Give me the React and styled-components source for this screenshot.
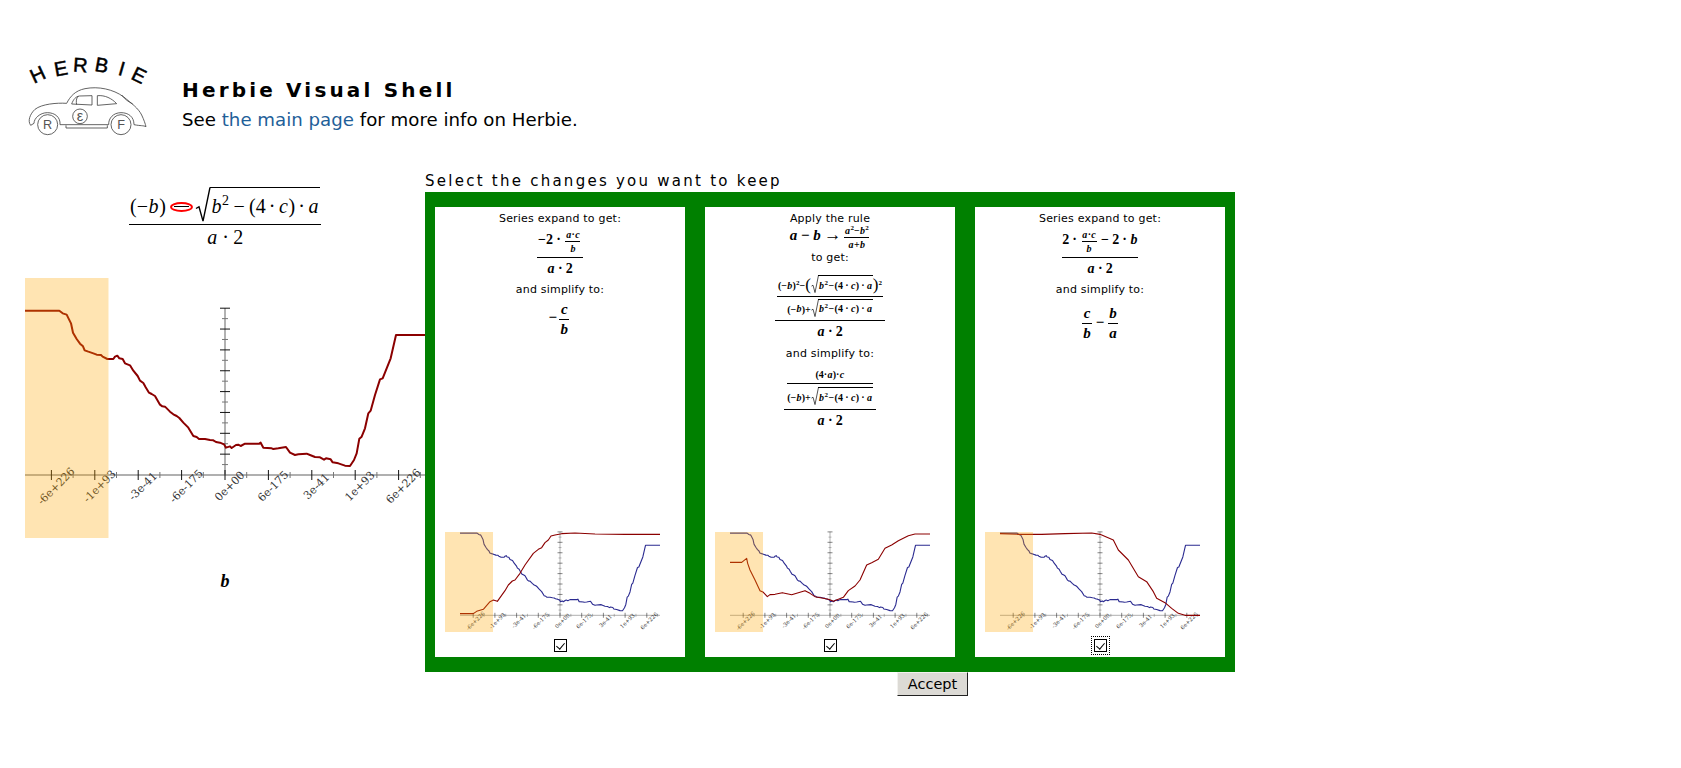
import React from 'react';
import styled, { createGlobalStyle } from 'styled-components';

const GlobalStyle = createGlobalStyle`
  html, body { margin: 0; padding: 0; background: #fff; }
  body { font-family: "DejaVu Sans", sans-serif; color: #000; }
`;

const MAIN_LINE = [[75,152],[178,152],[188,160],[200,164],[207,178],[213,190],[219,218],[230,237],[240,251],[249,259],[254,271],[265,275],[280,280],[290,284],[303,285],[308,290],[322,297],[340,297],[345,290],[352,287],[358,295],[368,297],[375,310],[390,316],[400,332],[413,348],[420,362],[430,369],[437,382],[447,398],[455,402],[465,408],[480,434],[487,439],[495,440],[510,455],[520,463],[530,468],[538,474],[550,488],[565,503],[580,528],[590,531],[597,537],[615,537],[630,540],[640,541],[648,546],[660,548],[672,553],[678,563],[690,559],[695,564],[708,555],[715,554],[722,558],[735,551],[778,551],[782,548],[790,563],[815,565],[820,567],[835,565],[858,561],[870,578],[885,585],[895,583],[920,581],[930,585],[945,591],[960,592],[972,599],[978,595],[992,598],[998,607],[1015,610],[1035,617],[1050,618],[1062,600],[1070,580],[1078,536],[1085,530],[1095,505],[1105,460],[1112,452],[1125,405],[1140,358],[1148,355],[1160,325],[1172,295],[1188,225],[1275,225]]
  .map(([x, y]) => [x / 3 - 25, y / 3 + 260 - 475]);

// red curves are traced at panel scale, so convert them to the big plot's units
const fromSmall = (pts) => pts.map(([x, y]) => [(x / 3 - 35) * 2, (y / 3 + 520 - 615.3) * 2]);

const EXPAND_A = fromSmall([[105,281],[145,281],[155,274],[175,268],[195,245],[205,240],[217,244],[240,212],[250,195],[262,183],[270,180],[285,160],[300,135],[325,100],[340,88],[350,83],[360,68],[370,60],[378,48],[390,45],[410,41],[450,39],[510,42],[600,43],[705,43]]);
const RULE_B = fromSmall([[105,127],[140,127],[155,115],[158,130],[165,150],[180,180],[195,212],[205,217],[217,230],[225,224],[240,223],[262,218],[290,224],[330,212],[345,220],[360,230],[400,238],[415,244],[445,232],[460,212],[480,198],[495,180],[515,135],[530,128],[550,118],[570,85],[590,75],[610,62],[640,47],[660,42],[705,42]]);
const EXPAND_C = fromSmall([[105,41],[160,43],[230,43],[300,41],[380,39],[405,43],[445,60],[460,90],[490,120],[520,170],[545,185],[565,215],[575,235],[600,248],[620,265],[640,280],[660,286],[705,286]]);

const LABELS = ['-6e+226', '-1e+93', '-3e-41', '-6e-175', '0e+00', '6e-175', '3e-41', '1e+93', '6e+226'];

function Plot({ scale, width, height, left, axisY, bandW, curves }) {
  const step = 43.4;
  const originX = 200;
  const xTicks = [];
  for (let i = -4; i <= 4; i++) xTicks.push(originX + i * step);
  const xMinor = [];
  for (let i = -4; i <= 4; i++) xMinor.push(originX + (i + 0.5) * step);
  const yStep = 20.85;
  return (
    <PlotSvg width={width} height={height} viewBox={`0 0 ${width} ${height}`}>
      <g transform={`translate(${left} ${axisY}) scale(${scale})`}>
        <line x1="0" x2="400" y1="0" y2="0" stroke="#b0b0b0" strokeWidth="2" />
        <line x1={originX} x2={originX} y1="0" y2="-167" stroke="#999" strokeWidth="1.5" />
        {xTicks.map((x) => <line key={x} x1={x} x2={x} y1="-5" y2="5" stroke="#111" />)}
        {xMinor.map((x) => <line key={x} x1={x} x2={x} y1="-3" y2="3" stroke="#777" />)}
        {[1, 2, 3, 4, 5, 6, 7, 8].map((i) => (
          <line key={i} x1={originX - 5} x2={originX + 5} y1={-i * yStep} y2={-i * yStep} stroke="#111" />
        ))}
        {[0.5, 1.5, 2.5, 3.5, 4.5, 5.5, 6.5, 7.5].map((i) => (
          <line key={i} x1={originX - 3} x2={originX + 3} y1={-i * yStep} y2={-i * yStep} stroke="#777" />
        ))}
        {LABELS.map((t, i) => {
          const x = originX + (i - 4) * step + 4.5;
          return (
            <AxisLabel key={t} x={x} y="15" textAnchor="middle" transform={`rotate(-45 ${x} 11)`}>{t}</AxisLabel>
          );
        })}
        {curves.map((c) => (
          <polyline
            key={c.color}
            points={c.points.map((p) => p.join(',')).join(' ')}
            fill="none"
            stroke={c.color}
            strokeWidth={c.width}
            strokeLinejoin="round"
          />
        ))}
      </g>
      <rect x="0" y="0" width={bandW} height={height} fill="orange" opacity="0.3" />
    </PlotSvg>
  );
}

function Logo() {
  const letters = [['H', 92, 122, -25], ['E', 156, 106, -10], ['R', 210, 96, 4], ['B', 272, 96, 10], ['I', 330, 106, 16], ['E', 378, 124, 26]];
  return (
    <LogoSvg viewBox="0 0 450 330" width="150" height="110">
      {letters.map(([l, x, y, r], i) => (
        <LogoLetter key={i} x={x} y={y} transform={`rotate(${r} ${x} ${y})`}>{l}</LogoLetter>
      ))}
      <g fill="none" stroke="#444" strokeWidth="2.5">
        <path d="M62 256 C52 243 60 222 75 208 C95 192 140 188 170 190 C180 170 195 152 225 146 C265 138 310 148 340 170 C365 190 385 205 395 225 C402 240 406 252 408 260 C400 256 392 258 372 254 C372 230 355 218 333 218 C310 218 295 235 296 254 L150 254 C152 232 135 218 112 218 C90 218 72 235 72 250 Z" />
        <path d="M185 192 C190 178 197 170 208 168 L246 167 L246 195 Z" />
        <path d="M205 168 C198 175 198 185 200 194" />
        <path d="M262 167 C285 165 305 175 320 191 L262 196 Z" />
        <path d="M335 165 C345 178 355 185 368 192" />
        <path d="M168 256 L168 264 L292 264 L292 256" />
        <circle cx="113" cy="254" r="30" />
        <circle cx="333" cy="254" r="30" />
        <circle cx="210" cy="229" r="22" />
      </g>
      <WheelText x="113" y="268" $size={38}>R</WheelText>
      <WheelText x="333" y="268" $size={38}>F</WheelText>
      <WheelText x="210" y="243" $size={44}>ε</WheelText>
    </LogoSvg>
  );
}

const V = styled.i`
  font-family: "Liberation Serif", serif;
  font-style: italic;
  padding: 0 0.03em;
`;

const Op = styled.span`
  font-family: "Liberation Serif", serif;
  font-style: normal;
  padding: 0 ${(p) => p.$gap || 0.22}em;
`;

const Arrow = styled.span`
  font-size: 1.15em;
  font-weight: 400;
  padding: 0 0.1em 0 0.15em;
`;

const Sup = styled.sup`
  font-size: 0.7em;
  line-height: 0;
  vertical-align: 0.55em;
`;

const Math = styled.span`
  display: inline-block;
  font-family: "Liberation Serif", serif;
  font-size: ${(p) => p.$size}px;
  font-weight: ${(p) => (p.$thin ? 400 : 700)};
  line-height: 1.1;
  white-space: nowrap;
`;

const FracBox = styled.span`
  display: inline-flex;
  flex-direction: column;
  align-items: center;
  vertical-align: middle;
  margin: 0 0.15em;
`;

const FracTop = styled.span`
  display: block;
  padding: 0 0.05em ${(p) => p.$gap || 2}px;
  border-bottom: 1px solid #000;
  width: 100%;
  box-sizing: border-box;
  text-align: center;
`;

const FracBottom = styled.span`
  display: block;
  padding: ${(p) => p.$gap || 2}px 0.05em 0;
`;

const RootBox = styled.span`
  display: inline-block;
  position: relative;
  padding-left: 0.75em;
`;

const RootSign = styled.svg`
  position: absolute;
  left: 0;
  top: 0;
  width: 0.8em;
  height: 100%;
`;

const RootBody = styled.span`
  display: inline-block;
  border-top: 1px solid #000;
  padding: 0.35em 0.05em 0.3em;
`;

const Bigger = styled.span`
  font-size: 1.7em;
  font-weight: 400;
  line-height: 0.8;
  vertical-align: -0.08em;
`;

const MinusCircle = styled.span`
  display: inline-block;
  width: 19px;
  height: 6px;
  margin: 0 2px 0 4px;
  border: 2px solid #f00;
  border-radius: 50%;
  vertical-align: 1px;
  position: relative;
  &::after {
    content: '';
    position: absolute;
    left: 2px;
    right: 2px;
    top: 2px;
    height: 1px;
    background: #000;
  }
`;

const Fr = ({ n, d, gap }) => (
  <FracBox>
    <FracTop $gap={gap}>{n}</FracTop>
    <FracBottom $gap={gap}>{d}</FracBottom>
  </FracBox>
);

const Root = ({ children }) => (
  <RootBox>
    <RootSign viewBox="0 0 16 40" preserveAspectRatio="none">
      <path d="M1 24 L4 22 L8 38 L15 0.5" fill="none" stroke="#000" strokeWidth="1.4" />
    </RootSign>
    <RootBody>{children}</RootBody>
  </RootBox>
);

const Disc = ({ thin }) => (
  <>
    <V>b</V><Sup>2</Sup><Op $gap={thin ? 0.22 : 0.05}>−</Op>(4<Op $gap={thin ? 0.15 : 0}>·</Op><V>c</V>)<Op $gap={thin ? 0.15 : 0}>·</Op><V>a</V>
  </>
);

const NegB = () => <>(−<V>b</V>)</>;

const ADenom = () => <><V>a</V><Op>·</Op>2</>;

const AC = () => <><V>a</V>·<V>c</V></>;

export default function App() {
  return (
    <Page>
      <GlobalStyle />
      <Header>
        <Logo />
        <Intro>
          <Title>Herbie Visual Shell</Title>
          <Blurb>See <MainLink href="#">the main page</MainLink> for more info on Herbie.</Blurb>
        </Intro>
      </Header>
      <Main>
        <LeftCol>
          <Formula>
            <Math $size={20} $thin>
              <Fr
                gap={1}
                n={<><NegB /><MinusCircle /><Root><Disc thin /></Root></>}
                d={<ADenom />}
              />
            </Math>
          </Formula>
          <Plot scale={1} width={400} height={260} left={0} axisY={197} bandW={83.5}
            curves={[{ color: '#8b0000', width: 2, points: MAIN_LINE }]} />
          <AxisName><Math $size={18}><V>b</V></Math></AxisName>
        </LeftCol>
        <RightCol>
          <Heading>Select the changes you want to keep</Heading>
          <Candidates>
            <Panel>
              <PanelBody>
                <Line>Series expand to get:</Line>
                <MathRow $top={4} $bottom={7}>
                  <Math $size={14}>
                    <Fr gap={3} n={<>−2<Op>·</Op><Math $size={10}><Fr gap={1} n={<AC />} d={<V>b</V>} /></Math></>} d={<ADenom />} />
                  </Math>
                </MathRow>
                <Line>and simplify to:</Line>
                <MathRow $top={5} $bottom={6}>
                  <Math $size={15}>−<Fr gap={1} n={<V>c</V>} d={<V>b</V>} /></Math>
                </MathRow>
              </PanelBody>
              <PanelPlot curves={EXPAND_A} />
              <Choice />
            </Panel>
            <Panel>
              <PanelBody>
                <Line>Apply the rule</Line>
                <RuleRow>
                  <Math $size={15}>
                    <V>a</V><Op>−</Op><V>b</V><Arrow>→</Arrow>
                    <Math $size={10}><Fr gap={1} n={<><V>a</V><Sup>2</Sup>−<V>b</V><Sup>2</Sup></>} d={<><V>a</V>+<V>b</V></>} /></Math>
                  </Math>
                </RuleRow>
                <Line>to get:</Line>
                <MathRow $top={11} $bottom={8}>
                  <Math $size={14}>
                    <Fr
                      gap={3}
                      n={
                        <Math $size={10}>
                          <Fr
                            gap={2}
                            n={<><NegB /><Sup>2</Sup>−<Bigger>(</Bigger><Root><Disc /></Root><Bigger>)</Bigger><Sup>2</Sup></>}
                            d={<><NegB />+<Root><Disc /></Root></>}
                          />
                        </Math>
                      }
                      d={<ADenom />}
                    />
                  </Math>
                </MathRow>
                <Line>and simplify to:</Line>
                <MathRow $top={9} $bottom={6}>
                  <Math $size={14}>
                    <Fr
                      gap={3}
                      n={
                        <Math $size={10}>
                          <Fr gap={3} n={<>(4·<V>a</V>)·<V>c</V></>} d={<><NegB />+<Root><Disc /></Root></>} />
                        </Math>
                      }
                      d={<ADenom />}
                    />
                  </Math>
                </MathRow>
              </PanelBody>
              <PanelPlot curves={RULE_B} />
              <Choice />
            </Panel>
            <Panel>
              <PanelBody>
                <Line>Series expand to get:</Line>
                <MathRow $top={4} $bottom={7}>
                  <Math $size={14}>
                    <Fr gap={3} n={<>2<Op>·</Op><Math $size={10}><Fr gap={1} n={<AC />} d={<V>b</V>} /></Math><Op>−</Op>2<Op>·</Op><V>b</V></>} d={<ADenom />} />
                  </Math>
                </MathRow>
                <Line>and simplify to:</Line>
                <MathRow $top={9} $bottom={6}>
                  <Math $size={15}>
                    <Fr gap={1} n={<V>c</V>} d={<V>b</V>} /><Op $gap={0.1}>−</Op><Fr gap={1} n={<V>b</V>} d={<V>a</V>} />
                  </Math>
                </MathRow>
              </PanelBody>
              <PanelPlot curves={EXPAND_C} />
              <Choice focused />
            </Panel>
          </Candidates>
          <AcceptRow><Accept type="button">Accept</Accept></AcceptRow>
        </RightCol>
      </Main>
    </Page>
  );
}

function PanelPlot({ curves }) {
  return (
    <Plot scale={0.5} width={215} height={100} left={15} axisY={83.3} bandW={48}
      curves={[
        { color: '#2a2a90', width: 2.2, points: MAIN_LINE },
        { color: '#8b0000', width: 2.2, points: curves },
      ]} />
  );
}

function Choice({ focused }) {
  return (
    <ChoiceRow>
      <CheckFrame $focused={focused}><Check type="checkbox" defaultChecked /></CheckFrame>
    </ChoiceRow>
  );
}

const Page = styled.div`
  width: 1681px;
  height: 768px;
  overflow: hidden;
`;

const Header = styled.header`
  display: flex;
  padding: 40px 0 0 10px;
`;

const LogoSvg = styled.svg`
  display: block;
  flex: none;
`;

const LogoLetter = styled.text`
  font-family: "Liberation Sans", sans-serif;
  font-size: 60px;
  text-anchor: middle;
  stroke: #000;
  stroke-width: 1.5px;
`;

const WheelText = styled.text`
  font-family: "Liberation Sans", sans-serif;
  font-size: ${(p) => p.$size}px;
  text-anchor: middle;
  fill: #555;
`;

const Intro = styled.div`
  margin-left: 22px;
  padding-top: 38px;
`;

const Title = styled.h1`
  margin: 0;
  font-size: 20px;
  line-height: 24px;
  font-weight: 700;
  letter-spacing: 3.17px;
`;

const Blurb = styled.p`
  margin: 7px 0 0;
  font-size: 18.2px;
  line-height: 21px;
`;

const MainLink = styled.a`
  color: #1f5f99;
  text-decoration: none;
`;

const Main = styled.main`
  display: flex;
  align-items: flex-start;
  padding: 22px 0 0 25px;
`;

const LeftCol = styled.section`
  width: 400px;
  flex: none;
  padding-top: 15px;
`;

const Formula = styled.div`
  height: 91px;
  text-align: center;
`;

const PlotSvg = styled.svg`
  display: block;
  overflow: visible;
`;

const AxisLabel = styled.text`
  font-family: "DejaVu Serif", serif;
  font-size: 11px;
  fill: #333;
`;

const AxisName = styled.div`
  margin-top: 34px;
  text-align: center;
`;

const RightCol = styled.section`
  width: 810px;
  flex: none;
  position: relative;
  z-index: 1;
`;

const Heading = styled.h2`
  margin: 0;
  height: 20px;
  font-size: 15px;
  line-height: 18px;
  font-weight: 400;
  letter-spacing: 2.25px;
  white-space: nowrap;
`;

const Candidates = styled.div`
  display: flex;
  gap: 20px;
  padding: 15px 10px;
  background: #008000;
`;

const Panel = styled.article`
  display: flex;
  flex-direction: column;
  width: 250px;
  height: 450px;
  padding: 0 0 0 10px;
  box-sizing: border-box;
  background: #fff;
`;

const PanelBody = styled.div`
  flex: 1;
  margin-left: -10px;
  padding-top: 5px;
  text-align: center;
  font-size: 11px;
  line-height: 13px;
`;

const Line = styled.div`
  letter-spacing: 0.2px;
`;

const MathRow = styled.div`
  margin: ${(p) => p.$top}px 0 ${(p) => p.$bottom}px;
`;

const RuleRow = styled.div`
  margin: 0 0 1px;
`;

const ChoiceRow = styled.div`
  display: flex;
  justify-content: center;
  margin-left: -10px;
  height: 25px;
  padding-top: 7px;
  box-sizing: border-box;
`;

const CheckFrame = styled.span`
  display: block;
  width: 13px;
  height: 13px;
  outline: ${(p) => (p.$focused ? '1px dotted #000' : 'none')};
  outline-offset: 2px;
`;

const Check = styled.input`
  appearance: none;
  display: block;
  position: relative;
  width: 13px;
  height: 13px;
  margin: 0;
  box-sizing: border-box;
  border: 1px solid #000;
  background: #fff;
  &::after {
    content: '';
    position: absolute;
    left: 3px;
    top: 1px;
    width: 4px;
    height: 7px;
    border: solid #000;
    border-width: 0 1.5px 1.5px 0;
    transform: rotate(40deg);
  }
`;

const AcceptRow = styled.div`
  padding-left: 472px;
`;

const Accept = styled.button`
  display: block;
  width: 71px;
  height: 24px;
  padding: 0;
  font-family: "DejaVu Sans", sans-serif;
  font-size: 14.5px;
  color: #000;
  background: #dcdad5;
  border: 1px solid;
  border-color: #f2f1ee #222 #222 #f2f1ee;
`;
